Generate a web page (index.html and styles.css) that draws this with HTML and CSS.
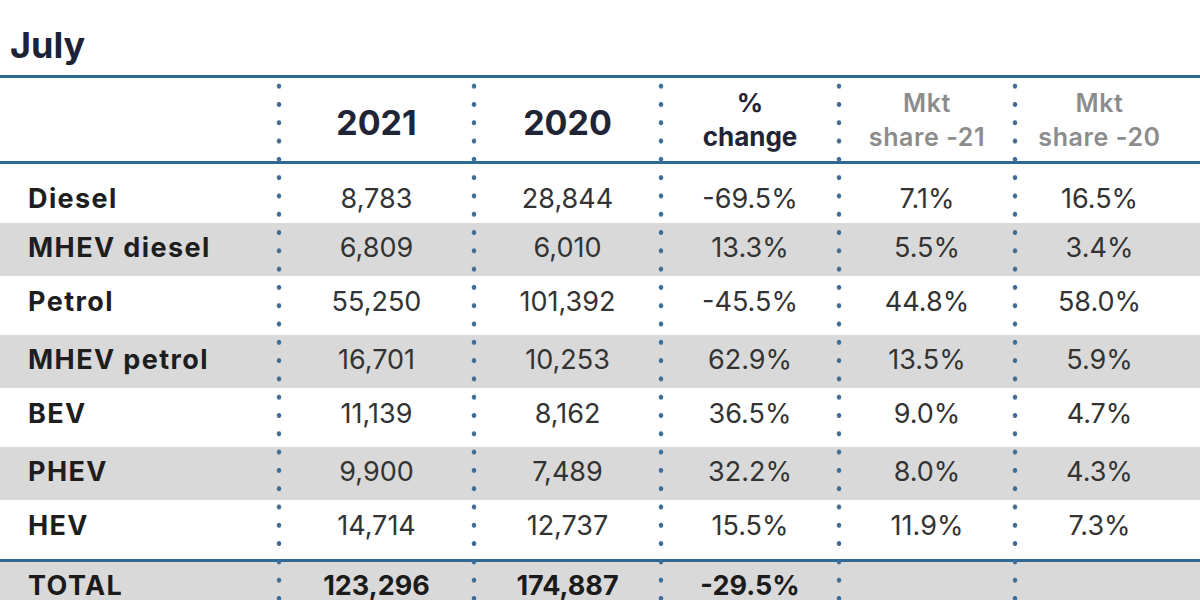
FILE: index.html
```html
<!DOCTYPE html>
<html lang="en">
<head>
<meta charset="utf-8">
<title>July</title>
<link rel="stylesheet" href="styles.css">
</head>
<body>
<h1 class="title">July</h1>
<div class="table">
  <div class="row head">
    <div class="cell label"></div>
    <div class="cell year">2021</div>
    <div class="cell year">2020</div>
    <div class="cell change">%<br>change</div>
    <div class="cell share">Mkt<br>share -21</div>
    <div class="cell share last">Mkt<br>share -20</div>
  </div>
  <div class="row first">
    <div class="cell label">Diesel</div>
    <div class="cell">8,783</div>
    <div class="cell">28,844</div>
    <div class="cell">-69.5%</div>
    <div class="cell">7.1%</div>
    <div class="cell last">16.5%</div>
  </div>
  <div class="row alt">
    <div class="cell label">MHEV diesel</div>
    <div class="cell">6,809</div>
    <div class="cell">6,010</div>
    <div class="cell">13.3%</div>
    <div class="cell">5.5%</div>
    <div class="cell last">3.4%</div>
  </div>
  <div class="row">
    <div class="cell label">Petrol</div>
    <div class="cell">55,250</div>
    <div class="cell">101,392</div>
    <div class="cell">-45.5%</div>
    <div class="cell">44.8%</div>
    <div class="cell last">58.0%</div>
  </div>
  <div class="row alt">
    <div class="cell label">MHEV petrol</div>
    <div class="cell">16,701</div>
    <div class="cell">10,253</div>
    <div class="cell">62.9%</div>
    <div class="cell">13.5%</div>
    <div class="cell last">5.9%</div>
  </div>
  <div class="row">
    <div class="cell label">BEV</div>
    <div class="cell">11,139</div>
    <div class="cell">8,162</div>
    <div class="cell">36.5%</div>
    <div class="cell">9.0%</div>
    <div class="cell last">4.7%</div>
  </div>
  <div class="row alt">
    <div class="cell label">PHEV</div>
    <div class="cell">9,900</div>
    <div class="cell">7,489</div>
    <div class="cell">32.2%</div>
    <div class="cell">8.0%</div>
    <div class="cell last">4.3%</div>
  </div>
  <div class="row">
    <div class="cell label">HEV</div>
    <div class="cell">14,714</div>
    <div class="cell">12,737</div>
    <div class="cell">15.5%</div>
    <div class="cell">11.9%</div>
    <div class="cell last">7.3%</div>
  </div>
  <div class="row total">
    <div class="cell label">TOTAL</div>
    <div class="cell">123,296</div>
    <div class="cell">174,887</div>
    <div class="cell">-29.5%</div>
    <div class="cell"></div>
    <div class="cell last"></div>
  </div>
</div>
</body>
</html>
```
FILE: styles.css
```css
html, body {
  margin: 0;
  padding: 0;
  background: #ffffff;
}

body {
  font-family: Inter, "Noto Sans", sans-serif;
  color: #333333;
}

.title {
  margin: 0;
  height: 75px;
  box-sizing: border-box;
  padding: 25px 0 0 10px;
  font-size: 36px;
  line-height: 40px;
  font-weight: 700;
  color: #1d2236;
}

.table {
  position: relative;
  border-top: 3px solid #2d6993;
}

.table::after {
  content: "";
  position: absolute;
  left: 0;
  right: 0;
  top: 0;
  bottom: 0;
  pointer-events: none;
  background-image:
    radial-gradient(circle, #3e6d98 0, #3e6d98 2px, rgba(62,109,152,0) 2.7px),
    radial-gradient(circle, #3e6d98 0, #3e6d98 2px, rgba(62,109,152,0) 2.7px),
    radial-gradient(circle, #3e6d98 0, #3e6d98 2px, rgba(62,109,152,0) 2.7px),
    radial-gradient(circle, #3e6d98 0, #3e6d98 2px, rgba(62,109,152,0) 2.7px),
    radial-gradient(circle, #3e6d98 0, #3e6d98 2px, rgba(62,109,152,0) 2.7px);
  background-size: 6px 18.3px;
  background-repeat: repeat-y;
  background-position: 276px -1px, 471px -1px, 658px -1px, 836px -1px, 1012px -1px;
}

.row {
  display: grid;
  grid-template-columns: 279px 195px 187px 178px 176px 1fr;
  align-items: center;
  box-sizing: border-box;
  height: 59px;
  padding-bottom: 7px;
  font-size: 27px;
  line-height: 32px;
}

.row.first {
  padding-top: 10px;
  padding-bottom: 0;
}

.row.alt {
  height: 53px;
  padding-bottom: 3px;
  background: #d9d9d9;
}

.row.head {
  height: 86px;
  padding-bottom: 0;
  border-bottom: 3px solid #2d6993;
}

.row.total {
  height: 51px;
  padding-bottom: 0;
  border-top: 3px solid #2d6993;
  background: #d9d9d9;
  font-weight: 700;
}

.cell {
  text-align: center;
  white-space: nowrap;
}

.cell.last {
  padding-right: 16px;
}

.cell.label {
  text-align: left;
  padding-left: 28px;
  font-size: 27px;
  letter-spacing: 1.4px;
  font-weight: 700;
  color: #1e1e1e;
}

.total .cell {
  color: #1b1b1b;
}

.cell.year {
  font-size: 34px;
  font-weight: 700;
  color: #1f2437;
  padding-top: 6px;
}

.cell.change {
  font-size: 26px;
  line-height: 34px;
  font-weight: 700;
  color: #1f2437;
}

.cell.share {
  font-size: 25px;
  line-height: 34px;
  letter-spacing: 0.6px;
  font-weight: 600;
  color: #8c8c8c;
}
```
